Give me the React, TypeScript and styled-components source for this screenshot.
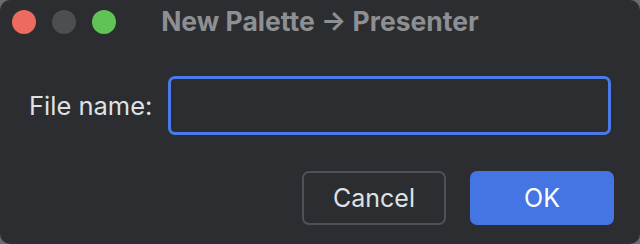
import React from 'react';
import styled, { createGlobalStyle } from 'styled-components';

const GlobalStyle = createGlobalStyle`
  html, body {
    margin: 0;
    padding: 0;
    background: #6b6c70;
  }
  body {
    font-family: Inter, "Noto Sans", sans-serif;
  }
`;

const Window = styled.div`
  width: 640px;
  height: 244px;
  box-sizing: border-box;
  background: #2b2d30;
  border-radius: 10px;
  overflow: hidden;
  display: flex;
  flex-direction: column;
`;

const TitleBar = styled.div`
  height: 42px;
  display: grid;
  grid-template-columns: 1fr auto 1fr;
  align-items: center;
  padding: 0 12px;
`;

const Lights = styled.div`
  display: flex;
  gap: 16px;
  padding-top: 2px;
`;

const Light = styled.span<{ color: string }>`
  width: 24px;
  height: 24px;
  border-radius: 50%;
  background: ${(p) => p.color};
`;

const Title = styled.div`
  font-size: 26.5px;
  font-weight: 700;
  color: #8e8f93;
`;

const FormRow = styled.div`
  display: flex;
  align-items: center;
  gap: 16px;
  margin-top: 34px;
  padding: 0 29px;
`;

const Label = styled.label`
  font-size: 25.5px;
  color: #dfe1e5;
  white-space: nowrap;
`;

const Input = styled.input`
  flex: 1;
  min-width: 0;
  height: 59px;
  box-sizing: border-box;
  border: 3px solid #4a7be9;
  border-radius: 7px;
  background: #2b2d30;
  color: #dfe1e5;
  font-size: 22px;
  outline: none;
  padding: 0 12px;
`;

const Buttons = styled.div`
  display: flex;
  justify-content: flex-end;
  gap: 24px;
  margin-top: 36px;
  padding: 0 26px;
`;

const Button = styled.button<{ primary?: boolean }>`
  width: 144px;
  height: 54px;
  box-sizing: border-box;
  border-radius: 7px;
  font-family: Inter, "Noto Sans", sans-serif;
  font-size: 25px;
  color: ${(p) => (p.primary ? '#ffffff' : '#dfe1e5')};
  background: ${(p) => (p.primary ? '#4574e3' : 'transparent')};
  border: 2px solid ${(p) => (p.primary ? '#4574e3' : '#4e5157')};
`;

export default function App() {
  return (
    <>
      <GlobalStyle />
      <Window>
        <TitleBar>
          <Lights>
            <Light color="#ed6a5e" />
            <Light color="#4d4e51" />
            <Light color="#5fc454" />
          </Lights>
          <Title>New Palette → Presenter</Title>
        </TitleBar>
        <FormRow>
          <Label>File name:</Label>
          <Input />
        </FormRow>
        <Buttons>
          <Button>Cancel</Button>
          <Button primary>OK</Button>
        </Buttons>
      </Window>
    </>
  );
}
